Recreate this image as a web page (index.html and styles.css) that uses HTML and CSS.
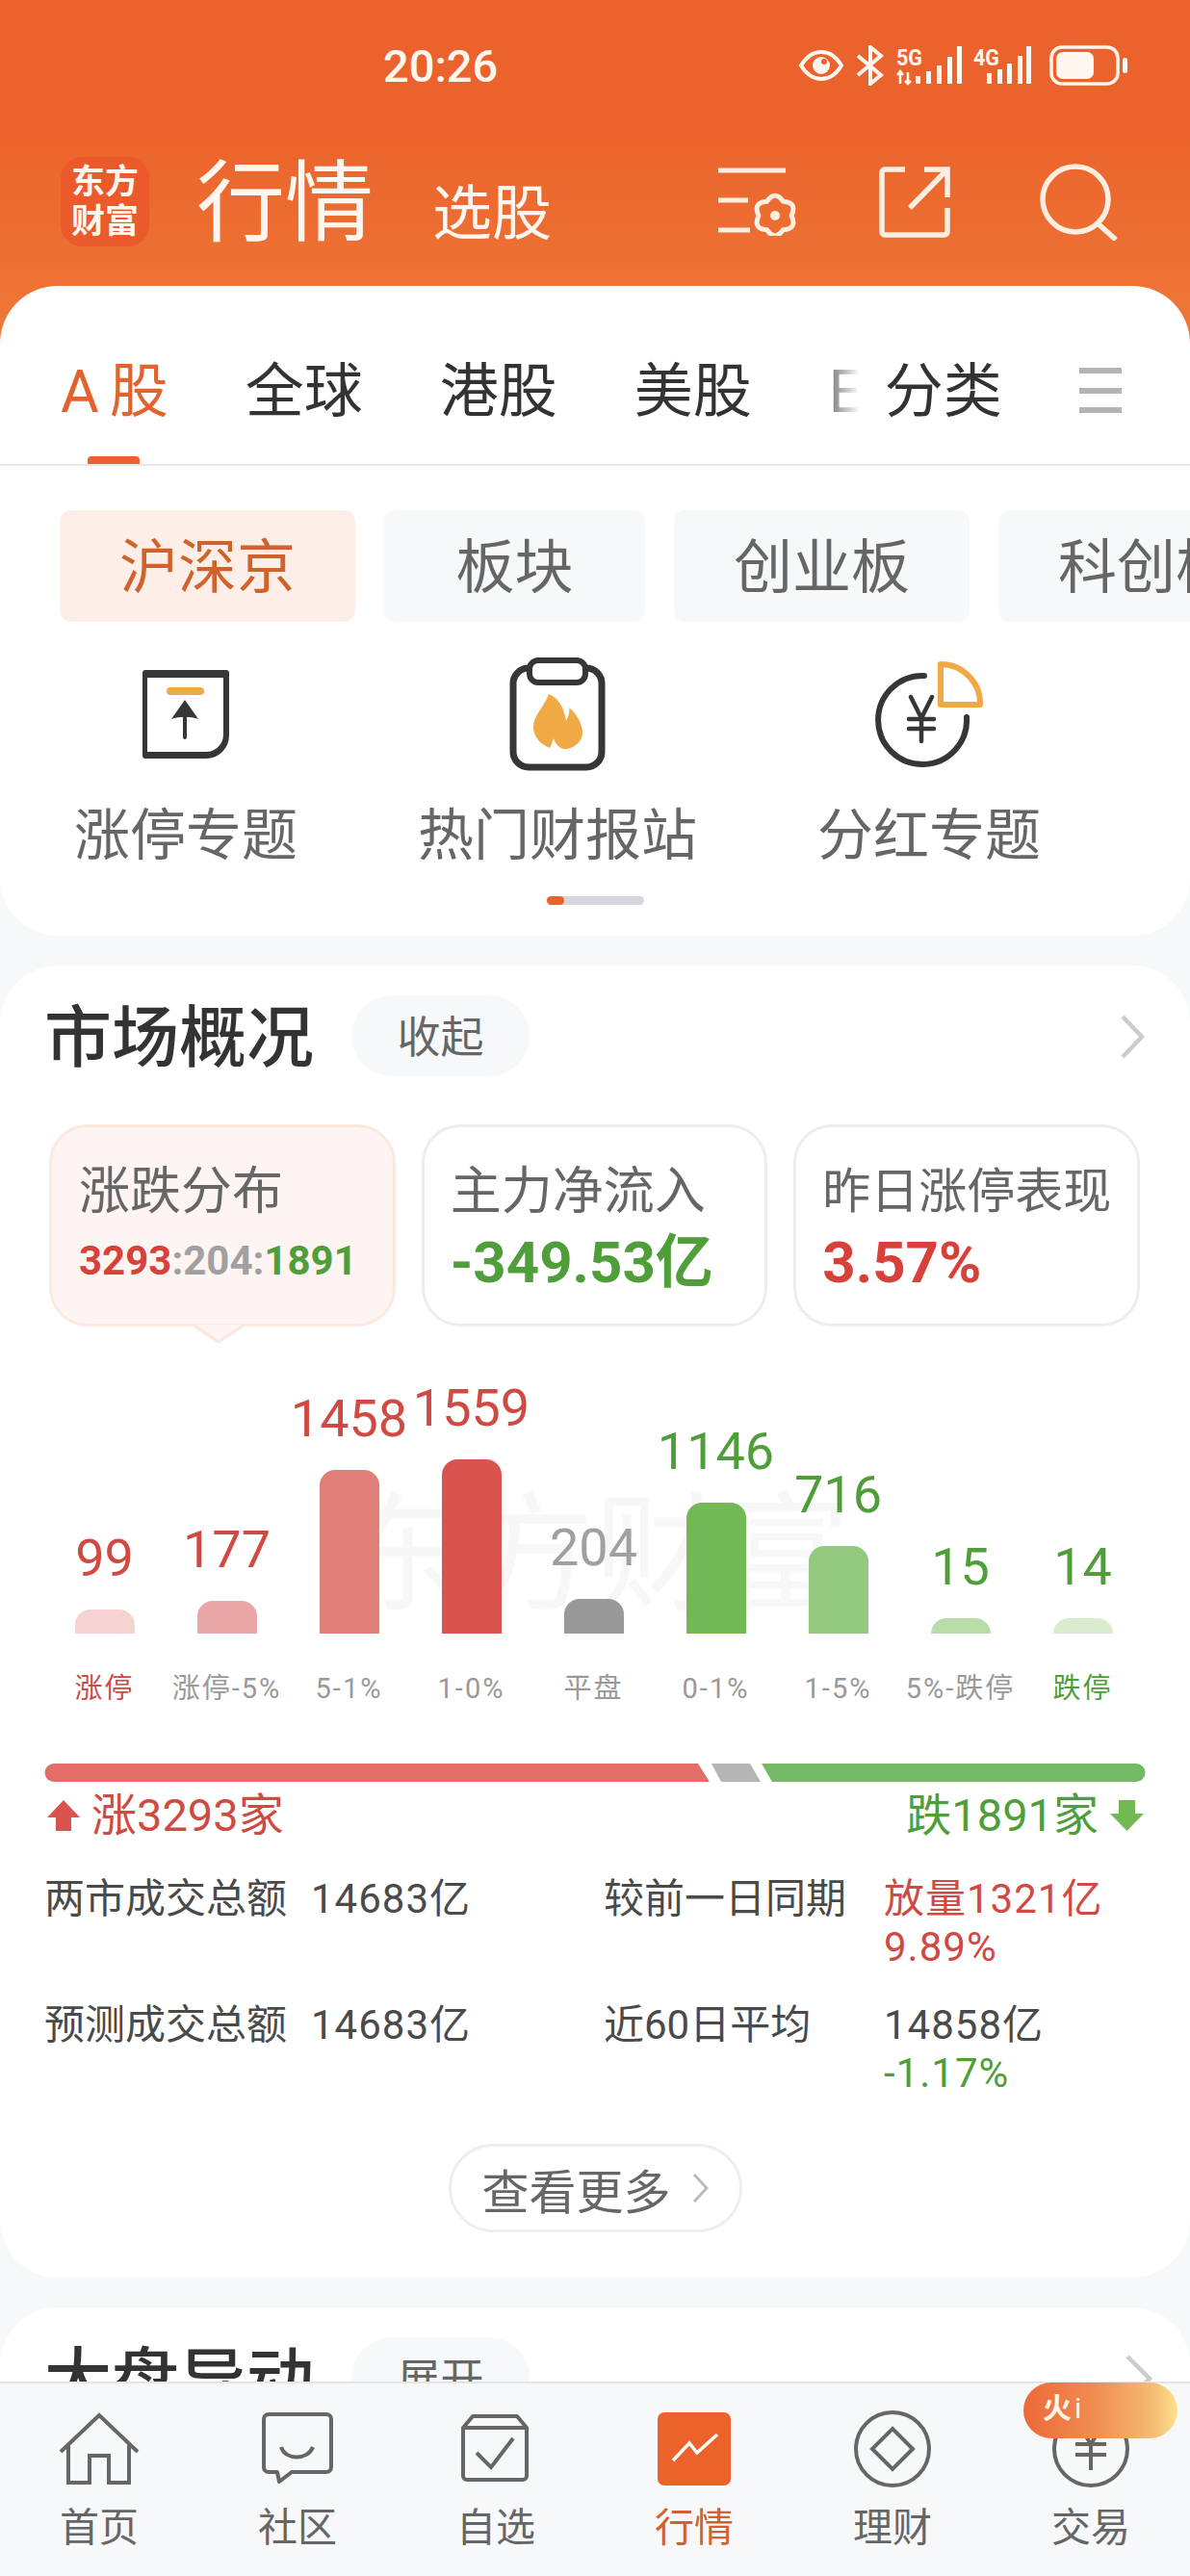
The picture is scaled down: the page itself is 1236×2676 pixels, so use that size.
FILE: index.html
```html
<!DOCTYPE html>
<html lang="zh-CN">
<head>
    <meta charset="UTF-8">
    <meta name="viewport" content="width=device-width, initial-scale=1.0">
    <title>行情</title>
    <link rel="stylesheet" href="styles.css">
</head>
<body>
<div class="app">
    <div class="main">
        <header class="top">
            <div class="status">
                <span class="time">20:26</span>
                <div class="status-icons">
                    <svg width="46" height="34" viewBox="0 0 46 34"><path d="M2 17C8 7 15 3 23 3s15 4 21 14c-6 10-13 14-21 14S8 27 2 17z" fill="none" stroke="#fff6f0" stroke-width="4"/><circle cx="23" cy="17" r="9" fill="#fff6f0"/><circle cx="26" cy="13" r="3" fill="#ec632c"/></svg>
                    <svg class="bluetooth" width="30" height="42" viewBox="0 0 30 42"><path d="M2 11l24 20-11 9V2l11 9L2 31" fill="none" stroke="#fff6f0" stroke-width="4"/></svg>
                    <svg class="signal" width="140" height="42" viewBox="0 0 140 42">
                        <text x="0" y="21" class="net" textLength="27" lengthAdjust="spacingAndGlyphs">5G</text>
                        <path d="M4 40V28M1 31l3-4 3 4M12 28v12M9 37l3 3 3-3" fill="none" stroke="#fff6f0" stroke-width="2.5"/>
                        <path d="M20 32h5v8h-5zM31 27h5v13h-5zM42 21h5v19h-5zM53 12h5v28h-5zM63 1h5v39h-5z" fill="#fff6f0"/>
                        <text x="80" y="21" class="net" textLength="27" lengthAdjust="spacingAndGlyphs">4G</text>
                        <path d="M94 29h5v11h-5zM105 25h5v15h-5zM115 19h5v21h-5zM126 11h5v29h-5zM135 1h5v39h-5z" fill="#fff6f0"/>
                    </svg>
                    <svg class="battery" width="82" height="42" viewBox="0 0 82 42"><rect x="2" y="2" width="69" height="38" rx="11" fill="none" stroke="#fff6f0" stroke-width="3.5"/><rect x="7" y="7" width="39" height="28" rx="7" fill="#fff6f0"/><rect x="76" y="13" width="5" height="16" rx="2.5" fill="#fff6f0"/></svg>
                </div>
            </div>
            <div class="title-bar">
                <div class="logo"><span>东方</span><span>财富</span></div>
                <h1>行情</h1>
                <span class="title-sub">选股</span>
                <div class="title-icons">
                    <svg width="84" height="71" viewBox="0 0 84 71"><path d="M1 3h70M1 34h31M1 65h33" fill="none" stroke="#fdeee2" stroke-width="5"/><path d="M77 50Q83.400 63.500 68.500 64.700 60 77 51.500 64.700 36.600 63.500 43 50 36.600 36.500 51.500 35.300 60 23 68.500 35.300 83.400 36.500 77 50z" fill="none" stroke="#fdeee2" stroke-width="5" stroke-linejoin="round"/><circle cx="60" cy="50" r="5" fill="#fdeee2"/></svg>
                    <svg width="76" height="76" viewBox="0 0 76 76"><path d="M28 4H7a3 3 0 0 0-3 3v62a3 3 0 0 0 3 3h62a3 3 0 0 0 3-3V44M48 4h24v29M70 6L33 44" fill="none" stroke="#fdeee2" stroke-width="5.5"/></svg>
                    <svg class="title-search" width="84" height="80" viewBox="0 0 84 80"><circle cx="37" cy="37" r="34" fill="none" stroke="#fdeee2" stroke-width="5.5"/><path d="M60 62l19 17" fill="none" stroke="#fdeee2" stroke-width="5.5"/></svg>
                </div>
            </div>
        </header>

        <section class="panel">
            <nav class="tabs">
                <span class="tab tab-active"><span class="tab-letter">A</span>股</span>
                <span class="tab">全球</span>
                <span class="tab">港股</span>
                <span class="tab">美股</span>
                <span class="tab tab-fade">E</span>
                <span class="tab">分类</span>
                <svg class="tab-menu" width="44" height="48" viewBox="0 0 44 48"><path d="M0 3h44M0 24h44M0 44h44" stroke="#b4b4b4" stroke-width="6"/></svg>
            </nav>
            <div class="chips">
                <span class="chip chip-active">沪深京</span>
                <span class="chip">板块</span>
                <span class="chip">创业板</span>
                <span class="chip">科创板</span>
            </div>
            <div class="shortcuts">
                <div class="shortcut">
                    <div class="shortcut-icon">
                        <svg width="90" height="92" viewBox="0 0 90 92"><path fill-rule="evenodd" d="M3 0H87a3 3 0 0 1 3 3V68a24 24 0 0 1-24 24H3a3 3 0 0 1-3-3V3a3 3 0 0 1 3-3zM5 8V85H66a18 18 0 0 0 18-18V8z" fill="#363636"/><rect x="25" y="18" width="39" height="8" rx="4" fill="#f0a944"/><path d="M44 70V44" stroke="#363636" stroke-width="4" stroke-linecap="round"/><path d="M44 31l14 20c-8-3-20-3-28 0z" fill="#363636"/></svg>
                    </div>
                    <span>涨停专题</span>
                </div>
                <div class="shortcut">
                    <div class="shortcut-icon">
                        <svg width="100" height="118" viewBox="0 0 100 118"><rect x="4" y="11" width="92" height="103" rx="16" fill="none" stroke="#363636" stroke-width="7"/><rect x="21" y="3" width="58" height="23" rx="9" fill="#fff" stroke="#363636" stroke-width="6"/><path d="M41 38C46 40 56 46 59 66C62 60 63 56 62 52C70 58 76 70 76 78C76 88 66 95 58 95C52 95 48 90 46 84C45 88 44 90 42 94C32 90 25 82 25 72C25 60 36 52 41 38z" fill="#f0a944"/></svg>
                    </div>
                    <span>热门财报站</span>
                </div>
                <div class="shortcut">
                    <div class="shortcut-icon">
                        <svg width="114" height="110" viewBox="0 0 114 110"><path d="M52 15A46 46 0 1 0 96 58" fill="none" stroke="#363636" stroke-width="6" stroke-linecap="round"/><path d="M38 37l11 22 11-22M36 60h26M36 70h26M49 59v24" fill="none" stroke="#363636" stroke-width="4.5" stroke-linecap="round"/><path d="M69 3A41 41 0 0 1 110 45H69z" fill="none" stroke="#f0a944" stroke-width="6" stroke-linejoin="round"/></svg>
                    </div>
                    <span>分红专题</span>
                </div>
            </div>
            <div class="pager"><span></span></div>
        </section>

        <section class="card">
            <div class="card-head">
                <h2>市场概况</h2>
                <span class="pill">收起</span>
                <svg class="chevron" width="26" height="46" viewBox="0 0 26 46"><path d="M3 2l20 21L3 44" fill="none" stroke="#ccc" stroke-width="4.5"/></svg>
            </div>
            <div class="metrics">
                <div class="metric metric-active">
                    <div class="metric-title">涨跌分布</div>
                    <div class="metric-ratio"><span class="strong-up">3293</span><span class="flat">:204:</span><span class="down">1891</span></div>
                </div>
                <div class="metric">
                    <div class="metric-title">主力净流入</div>
                    <div class="metric-value down">-349.53亿</div>
                </div>
                <div class="metric">
                    <div class="metric-title">昨日涨停表现</div>
                    <div class="metric-value strong-up">3.57%</div>
                </div>
            </div>
            <div class="chart">
                <div class="watermark">东方财富</div>
                <div class="col"><span class="num up">99</span><div class="bar" style="height:25px;background:#f4d3d2"></div></div>
                <div class="col"><span class="num up">177</span><div class="bar" style="height:34px;background:#e8a6a6"></div></div>
                <div class="col"><span class="num up">1458</span><div class="bar" style="height:170px;background:#e07e7a"></div></div>
                <div class="col"><span class="num up">1559</span><div class="bar" style="height:181px;background:#d9534f"></div></div>
                <div class="col"><span class="num flat">204</span><div class="bar" style="height:36px;background:#999"></div></div>
                <div class="col"><span class="num down">1146</span><div class="bar" style="height:136px;background:#72b855"></div></div>
                <div class="col"><span class="num down">716</span><div class="bar" style="height:91px;background:#92c97e"></div></div>
                <div class="col"><span class="num down">15</span><div class="bar" style="height:16px;background:#b8dda8"></div></div>
                <div class="col"><span class="num down">14</span><div class="bar" style="height:16px;background:#d9ecd0"></div></div>
            </div>
            <div class="chart-labels">
                <span class="up">涨停</span>
                <span>涨停-5%</span>
                <span>5-1%</span>
                <span>1-0%</span>
                <span>平盘</span>
                <span>0-1%</span>
                <span>1-5%</span>
                <span>5%-跌停</span>
                <span class="down">跌停</span>
            </div>
            <svg class="ratio-bar" width="1144" height="19" viewBox="0 0 1144 19">
                <path d="M10 0H679L691 19H10A9.500 9.500 0 0 1 10 0z" fill="#e26d69"/>
                <path d="M693 0H733L744 19H703z" fill="#b5b5b5"/>
                <path d="M745 0H1134A9.500 9.500 0 0 1 1134 19H756z" fill="#75b865"/>
            </svg>
            <div class="legend">
                <div class="legend-item up">
                    <svg width="34" height="32" viewBox="0 0 34 32"><path d="M17 0l17 18H25v14H9V18H0z" fill="#d9534f"/></svg>
                    <span>涨3293家</span>
                </div>
                <div class="legend-item down">
                    <span>跌1891家</span>
                    <svg width="35" height="32" viewBox="0 0 35 32"><path d="M17.500 32L35 14H26V0H9V14H0z" fill="#72b855"/></svg>
                </div>
            </div>
            <div class="stats">
                <span>两市成交总额</span>
                <span class="val">14683亿</span>
                <span>较前一日同期</span>
                <span class="val up">放量1321亿<br>9.89%</span>
                <span>预测成交总额</span>
                <span class="val">14683亿</span>
                <span>近60日平均</span>
                <span class="val">14858亿<br><span class="down">-1.17%</span></span>
            </div>
            <div class="more-wrap">
                <span class="more">查看更多
                    <svg width="17" height="30" viewBox="0 0 17 30"><path d="M2 1l13 14L2 29" fill="none" stroke="#bbb" stroke-width="3"/></svg>
                </span>
            </div>
        </section>

        <section class="card">
            <div class="card-head">
                <h2>大盘异动</h2>
                <span class="pill">展开</span>
                <svg class="chevron chevron-next" width="28" height="50" viewBox="0 0 28 50"><path d="M2 2l23 23L2 48" fill="none" stroke="#ccc" stroke-width="4.5"/></svg>
            </div>
        </section>
    </div>

    <footer class="tabbar">
        <div class="tabbar-item">
            <svg width="84" height="76" viewBox="0 0 84 76"><path d="M2 41L42 3l40 38M10 34V73H32V45H52V73H73V34" fill="none" stroke="#666" stroke-width="4"/></svg>
            <span>首页</span>
        </div>
        <div class="tabbar-item">
            <svg width="74" height="76" viewBox="0 0 74 76"><path d="M7 2H67a5 5 0 0 1 5 5V57a5 5 0 0 1-5 5H31L18 72 16 62H7a5 5 0 0 1-5-5V7a5 5 0 0 1 5-5z" fill="none" stroke="#666" stroke-width="4" stroke-linejoin="round"/><path d="M20 36c4 14 28 14 33 0" fill="none" stroke="#666" stroke-width="4"/></svg>
            <span>社区</span>
        </div>
        <div class="tabbar-item">
            <svg class="tabbar-box" width="72" height="76" viewBox="0 0 72 76"><path d="M3 16L13 4H59L69 16V66a4 4 0 0 1-4 4H7a4 4 0 0 1-4-4zM3 16H69" fill="none" stroke="#666" stroke-width="4" stroke-linejoin="round"/><path d="M17 42l15 15 23-30" fill="none" stroke="#666" stroke-width="4"/></svg>
            <span>自选</span>
        </div>
        <div class="tabbar-item tabbar-active">
            <svg width="76" height="76" viewBox="0 0 76 76"><rect width="76" height="76" rx="7" fill="#eb622b"/><path d="M16 50L33 32l8 10 21-19" fill="none" stroke="#fff" stroke-width="3.500"/></svg>
            <span>行情</span>
        </div>
        <div class="tabbar-item">
            <svg class="tabbar-round" width="80" height="80" viewBox="0 0 80 80"><circle cx="40" cy="40" r="38" fill="none" stroke="#666" stroke-width="4"/><path d="M40 19l21 21-21 21-21-21z" fill="none" stroke="#666" stroke-width="4"/></svg>
            <span>理财</span>
        </div>
        <div class="tabbar-item">
            <svg class="tabbar-round" width="80" height="80" viewBox="0 0 80 80"><circle cx="40" cy="40" r="38" fill="none" stroke="#666" stroke-width="4"/><path d="M28 16l12 19 12-19M24 35h32M24 46h32M40 35v27" fill="none" stroke="#666" stroke-width="4"/></svg>
            <span>交易</span>
        </div>
        <div class="badge">火<i>i</i></div>
    </footer>
</div>
</body>
</html>
```

FILE: styles.css
```css
* {
    box-sizing: border-box;
}
html, body {
    margin: 0;
    padding: 0;
    height: 100%;
}
body {
    background-color: #F7F8FA;
    color: #666;
    font-family: Roboto, "Noto Sans CJK SC", sans-serif;
}
h1, h2 {
    margin: 0;
    font-weight: 400;
}
svg {
    display: block;
    flex-shrink: 0;
}
.app {
    height: 100vh;
    display: flex;
    flex-direction: column;
    overflow: hidden;
}
.main {
    flex: 1;
    min-height: 0;
    overflow: hidden;
}
.up { color: #CF4A43; }
.strong-up { color: #D8403A; }
.down { color: #4F9E3A; }
.flat { color: #A0A0A0; }

/* orange header */
.top {
    height: 357px;
    margin-bottom: -60px;
    padding-top: 47px;
    background: linear-gradient(#EB622C 0, #EB632C 130px, #EE7736 340px);
    color: #FFF6F0;
}
.status {
    display: flex;
    justify-content: space-between;
    align-items: center;
    height: 42px;
    padding: 0 64px 0 398px;
}
.time {
    font-size: 47px;
    font-weight: 500;
}
.status-icons {
    display: flex;
    align-items: center;
    gap: 11px;
}
.bluetooth {
    margin-left: 2px;
}
.net {
    font-family: Roboto, sans-serif;
    font-weight: 700;
    font-size: 24px;
    fill: #FFF6F0;
}
.signal {
    margin-left: 1px;
}
.battery {
    margin-left: 8px;
}
.title-bar {
    display: flex;
    align-items: flex-end;
    height: 93px;
    margin-top: 74px;
    padding: 0 72px 0 63px;
}
.logo {
    display: flex;
    flex-direction: column;
    align-items: center;
    justify-content: center;
    width: 92px;
    height: 93px;
    border-radius: 22px;
    background-color: #EA5A2A;
    color: #FFF6F0;
    font-size: 35px;
    font-weight: 700;
    line-height: 41px;
}
h1 {
    margin-left: 49px;
    font-size: 92px;
    line-height: 88px;
}
.title-sub {
    margin-left: 61px;
    font-size: 62px;
    line-height: 66px;
}
.title-icons {
    display: flex;
    align-items: center;
    align-self: center;
    gap: 83px;
    margin-left: auto;
}
.title-search {
    margin-left: 9px;
}

/* tabs panel */
.panel {
    position: relative;
    padding-bottom: 32px;
    border-radius: 60px;
    background-color: #FFF;
}
.tabs {
    display: flex;
    align-items: center;
    gap: 80px;
    padding: 79px 71px 46px 63px;
    border-bottom: 2px solid #E8E8E8;
    color: #333;
    font-size: 61px;
    line-height: 62px;
}
.tab {
    position: relative;
    flex-shrink: 0;
    height: 60px;
}
.tab-active {
    color: #E2632D;
}
.tab-active::after {
    content: "";
    position: absolute;
    left: 28px;
    bottom: -46px;
    width: 54px;
    height: 8px;
    border-radius: 4px 4px 0 0;
    background-color: #EB622B;
}
.tab-letter {
    margin-right: 11px;
}
.tab-fade {
    width: 32px;
    margin-right: -54px;
    overflow: hidden;
    color: #777;
    -webkit-mask-image: linear-gradient(to right, #000, transparent);
    mask-image: linear-gradient(to right, #000, transparent);
}
.tab-menu {
    margin-left: auto;
    margin-right: 0;
}
.chips {
    display: flex;
    gap: 30px;
    margin-top: 46px;
    padding-left: 62px;
    overflow: hidden;
}
.chip {
    flex-shrink: 0;
    min-width: 271px;
    height: 116px;
    padding: 0 62px;
    border-radius: 12px;
    background-color: #F7F8FA;
    font-size: 61px;
    line-height: 121px;
    text-align: center;
}
.chip-active {
    background-color: #FDEEE8;
    color: #D2622C;
}
.shortcuts {
    display: grid;
    grid-template-columns: repeat(3, 386px);
    margin-top: 37px;
}
.shortcut {
    display: flex;
    flex-direction: column;
    align-items: center;
    font-size: 58px;
    line-height: 60px;
}
.shortcut-icon {
    display: flex;
    align-items: center;
    justify-content: center;
    height: 118px;
    margin-bottom: 37px;
}
.pager {
    width: 101px;
    height: 9px;
    margin: 33px auto 0;
    border-radius: 5px;
    background-color: #D5D7DC;
}
.pager span {
    display: block;
    width: 18px;
    height: 9px;
    border-radius: 5px;
    background-color: #EB622B;
}

/* cards */
.card {
    margin-top: 31px;
    padding-bottom: 47px;
    border-radius: 60px;
    background-color: #FFF;
}
.card-head {
    display: flex;
    align-items: flex-start;
    height: 115px;
    padding: 31px 47px 0 46px;
}
h2 {
    color: #333;
    font-size: 70px;
    font-weight: 500;
    line-height: 90px;
}
.pill {
    width: 185px;
    height: 84px;
    margin-left: 39px;
    border-radius: 42px;
    background-color: #F7F8FA;
    font-size: 45px;
    line-height: 90px;
    text-align: center;
}
.chevron {
    margin-top: 20px;
    margin-left: auto;
}
.chevron-next {
    margin-top: 18px;
    margin-right: -8px;
}
.metrics {
    display: grid;
    grid-template-columns: repeat(3, 1fr);
    gap: 27px;
    margin-top: 50px;
    padding: 0 52px 0 51px;
}
.metric {
    position: relative;
    height: 210px;
    padding: 37px 0 0 27px;
    border: 3px solid #EDEDED;
    border-radius: 40px;
    background-color: #FFF;
}
.metric-active {
    padding-left: 28px;
    border-color: #FBE8DF;
    background-color: #FEF4F1;
}
.metric-active::before,
.metric-active::after {
    content: "";
    position: absolute;
    left: 146px;
    bottom: -21px;
    width: 54px;
    height: 18px;
    background-color: #FBE8DF;
    clip-path: polygon(0 0, 100% 0, 50% 100%);
}
.metric-active::after {
    left: 149px;
    bottom: -17px;
    width: 48px;
    height: 16px;
    background-color: #FEF4F1;
}
.metric-title {
    font-size: 53px;
    line-height: 60px;
    white-space: nowrap;
}
.metric:last-child .metric-title {
    font-size: 50px;
}
.metric-ratio {
    margin-top: 17px;
    font-size: 42px;
    font-weight: 700;
    line-height: 50px;
}
.metric-value {
    margin-top: 9px;
    font-size: 60px;
    font-weight: 700;
    line-height: 70px;
    white-space: nowrap;
}
.chart {
    position: relative;
    display: grid;
    grid-template-columns: repeat(9, 127px);
    align-items: end;
    height: 319px;
    padding-left: 45px;
}
.watermark {
    position: absolute;
    left: 351px;
    bottom: 10px;
    color: #F7F7F7;
    font-size: 133px;
    line-height: 140px;
    white-space: nowrap;
}
.col {
    position: relative;
    display: flex;
    flex-direction: column;
    align-items: center;
}
.num {
    margin-bottom: 26px;
    font-size: 54px;
    font-weight: 400;
    line-height: 54px;
}
.bar {
    width: 62px;
    border-radius: 16px 16px 0 0;
}
.chart-labels {
    display: grid;
    grid-template-columns: repeat(9, 127px);
    margin-top: 42px;
    padding-left: 45px;
    color: #999;
    font-size: 29px;
    letter-spacing: 2px;
    line-height: 30px;
    text-align: center;
    white-space: nowrap;
}
.ratio-bar {
    margin: 63px 0 0 46px;
}
.legend {
    display: flex;
    justify-content: space-between;
    margin-top: 10px;
    padding: 0 48px 0 49px;
}
.legend-item {
    display: flex;
    align-items: center;
    gap: 12px;
    font-size: 47px;
    line-height: 50px;
}
.stats {
    display: grid;
    grid-template-columns: 277px 304px 291px 1fr;
    row-gap: 31px;
    margin-top: 37px;
    padding-left: 46px;
    color: #4A4A4A;
    font-size: 42px;
    line-height: 50px;
}
.stats .val {
    letter-spacing: 1px;
}
.stats .up { color: #CF4A43; }
.more-wrap {
    display: flex;
    justify-content: center;
    margin-top: 48px;
}
.more {
    display: flex;
    align-items: center;
    justify-content: center;
    gap: 22px;
    width: 305px;
    height: 92px;
    border: 3px solid #EEE;
    border-radius: 46px;
    font-size: 49px;
}

/* bottom bar */
.tabbar {
    position: relative;
    display: grid;
    grid-template-columns: repeat(6, 206px);
    flex-shrink: 0;
    height: 202px;
    padding-top: 30px;
    border-top: 2px solid #E5E5E5;
    background-color: #F7F8FA;
}
.tabbar-item {
    display: flex;
    flex-direction: column;
    align-items: center;
    height: 76px;
    font-size: 41px;
    line-height: 44px;
}
.tabbar-item span {
    margin-top: 22px;
}
.tabbar-box {
    margin-left: -3px;
}
.tabbar-round {
    margin: -2px 0;
}
.tabbar-active {
    color: #D2622C;
}
.badge {
    position: absolute;
    top: -1px;
    left: 1063px;
    width: 160px;
    height: 58px;
    padding-left: 20px;
    border-radius: 29px;
    background: linear-gradient(to right, #EC6A3A, #F08B50 45%, #F4BD74 85%, #FBE38C);
    color: #FFF4E8;
    font-size: 30px;
    font-weight: 700;
    line-height: 54px;
}
.badge i {
    margin-left: 3px;
    font-style: normal;
    font-weight: 400;
}
```
